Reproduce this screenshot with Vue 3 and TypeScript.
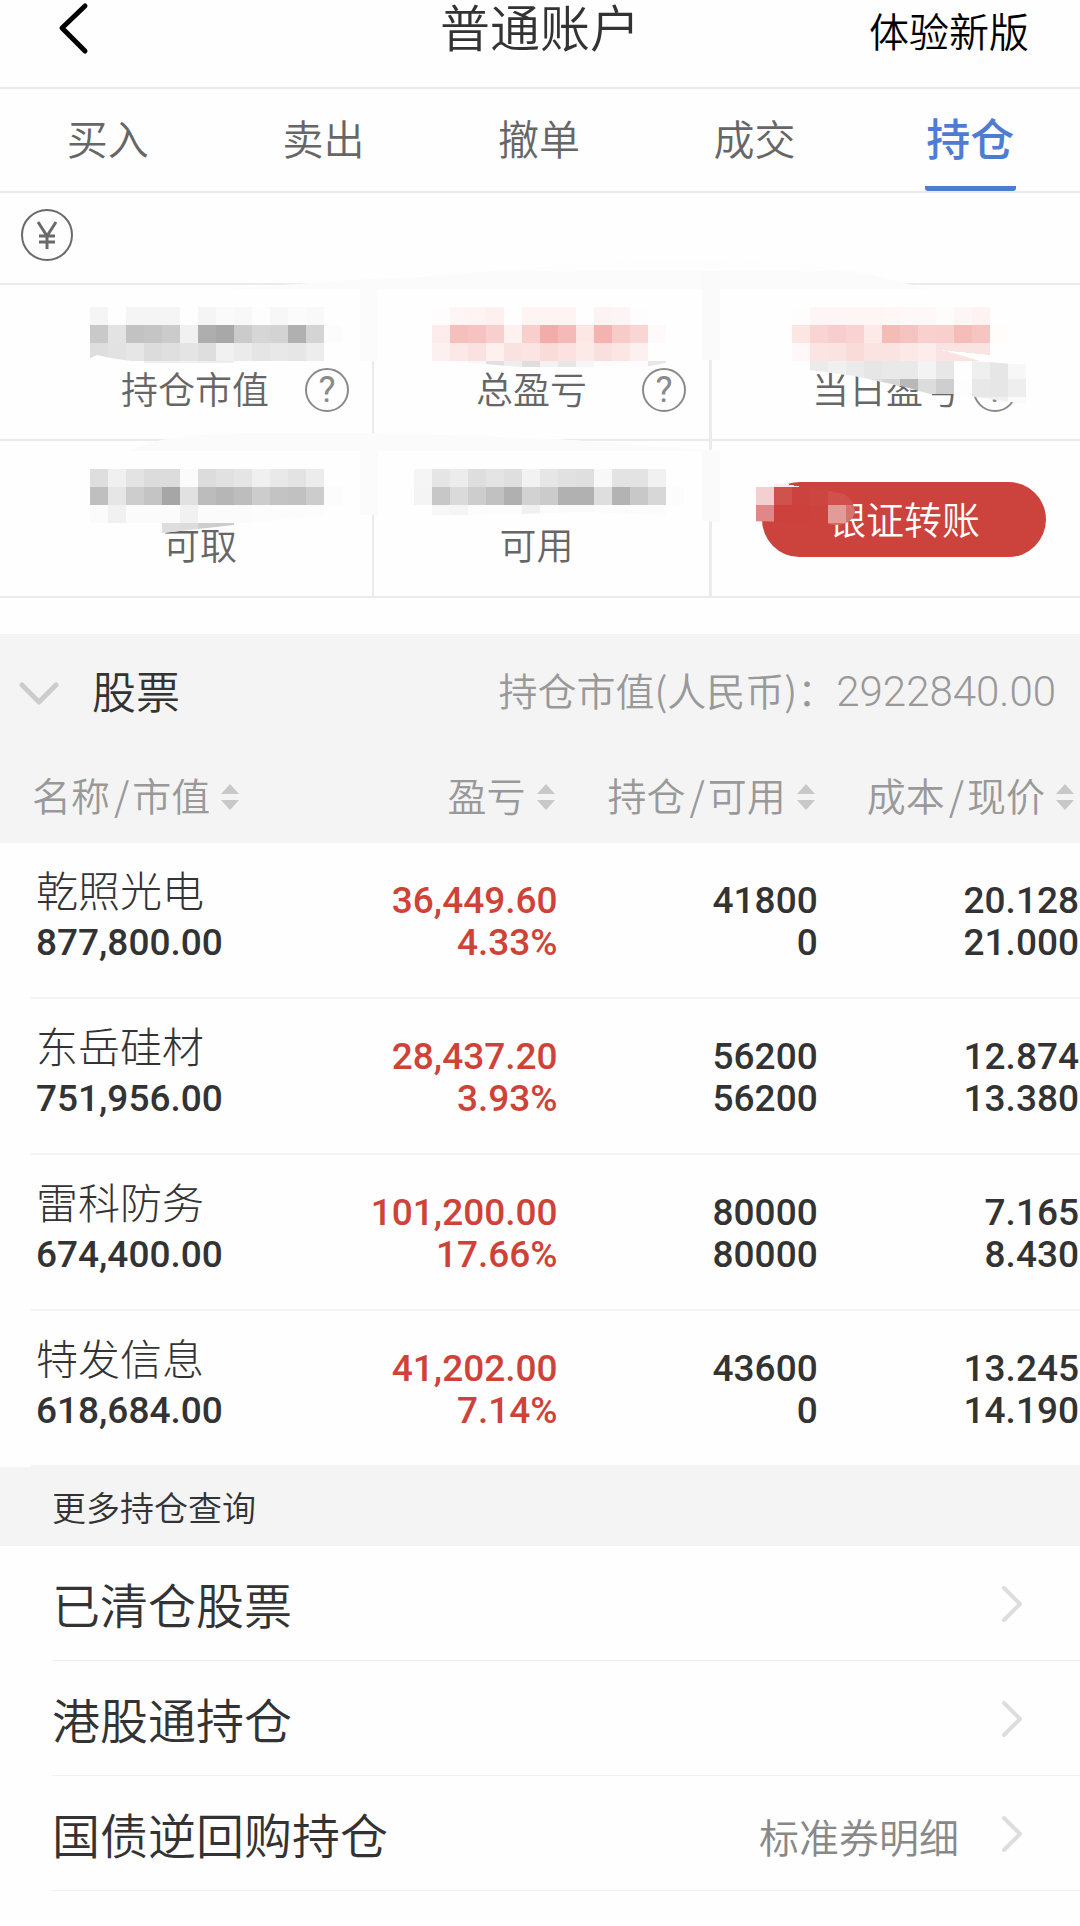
<script setup lang="ts">
import { ref } from 'vue'

interface Holding {
  name: string
  value: string
  profit: string
  rate: string
  held: string
  usable: string
  cost: string
  price: string
}

interface MoreLink {
  label: string
  note?: string
}

interface MosaicRow {
  x: number
  y: number
  colors: string
}

const tabs: string[] = ['买入', '卖出', '撤单', '成交', '持仓']
const active = ref<string>('持仓')

const columns: string[][] = [['名称', '市值'], ['盈亏'], ['持仓', '可用'], ['成本', '现价']]

const holdings: Holding[] = [
  { name: '乾照光电', value: '877,800.00', profit: '36,449.60', rate: '4.33%', held: '41800', usable: '0', cost: '20.128', price: '21.000' },
  { name: '东岳硅材', value: '751,956.00', profit: '28,437.20', rate: '3.93%', held: '56200', usable: '56200', cost: '12.874', price: '13.380' },
  { name: '雷科防务', value: '674,400.00', profit: '101,200.00', rate: '17.66%', held: '80000', usable: '80000', cost: '7.165', price: '8.430' },
  { name: '特发信息', value: '618,684.00', profit: '41,202.00', rate: '7.14%', held: '43600', usable: '0', cost: '13.245', price: '14.190' },
]

const links: MoreLink[] = [
  { label: '已清仓股票' },
  { label: '港股通持仓' },
  { label: '国债逆回购持仓', note: '标准券明细' },
]

// Privacy mosaic: every colour in a row is one 18px block.
const block = 18

const upperMosaic: MosaicRow[] = [
  { x: 90, y: 307, colors: 'f5f5f5 fefefe f5f5f5 f5f5f5 f5f5f5 fefefe f5f5f5 fafafa f8f8f8 fdfdfd f7f7f7 fbfbfb f9f9f9' },
  { x: 90, y: 325, colors: 'c9c9c9 e3e3e3 c2c2c2 c5c5c5 cbcbcb f1f1f1 aeaeae a8a8a8 cbcbcb d6d6d6 d3d3d3 b0b0b0 d4d4d4 fcfcfc' },
  { x: 90, y: 343, colors: 'dedede e2e2e2 e6e6e6 dcdcdc dfdfdf e4e4e4 dedede f1f1f1 ebebeb e5e5e5 e8e8e8 e6e6e6 ededed' },
  { x: 144, y: 361, colors: 'f0f0f0 eeeeee f0f0f0 eeeeee eaeaea' },
  { x: 432, y: 307, colors: 'fefcfc fef5f4 fff4f3 fdf0ef fefefe fef4f3 fef4f3 fef4f3 fefefe fcf3f3 fdf5f5 fefcfc' },
  { x: 432, y: 325, colors: 'fcedec f5bfbb f6c4c0 f8cfcd fef2f0 f8cfcd f2aca9 f5bab7 fce7e5 f4b3b1 f7ccc8 f9d5d3 fff9f9' },
  { x: 432, y: 343, colors: 'fdf0f0 fce8e7 fbe2e1 fdf0ee fae2e1 fbe4e3 f9dbd8 fbe1df fceae8 fadfdf fbe6e4 fdf0f0' },
  { x: 468, y: 361, colors: 'f7f7f7 e0e0e0 eeeeee dedede f2f2f2 e6e6e6 f6f6f6 fcfcfc fcfcfc fcfcfc e6e6e6' },
  { x: 792, y: 307, colors: 'fffcfc fef6f6 fef6f6 fdf6f5 fdf6f4 fef7f6 fef9f8 fef8f6 fefcfb fef6f6 fff3f1' },
  { x: 792, y: 325, colors: 'fbe6e4 f8d4d2 f7cecd f9d3d2 fce9e8 f5bbb7 f5c4c1 f8d0ce f8cfcd f5bcb8 f5c5c1 fffcfa' },
  { x: 792, y: 343, colors: 'fef8f8 fce4e4 fbe3e2 f9dbd9 fbe3e2 fbe3e2 fce8e7 fcecec fbe3e3 fbe3e1 fbe3e1' },
]

const shadeMosaic: MosaicRow[] = [
  { x: 810, y: 361, colors: 'ebebeb f0f0f0 ebebeb e6e6e6 e9e9e9 e9e9e9 f3f3f3 e8e6e7 fefefe efefef e6e6e6 f7f7f7' },
  { x: 864, y: 379, colors: 'dddddd d5d5d5 b8b8b8 dcdcdc cecece fdfdfd e8e8e8 e6e6e6 eeeeee' },
  { x: 972, y: 397, colors: 'f0f0f0 f0f0f0 fafafa' },
]

const lowerMosaic: MosaicRow[] = [
  { x: 90, y: 469, colors: 'dedede f0f0f0 e3e3e3 dcdcdc dcdcdc fbfbfb dcdcdc e1e1e1 e5e5e5 f0f0f0 e9e9e9 e3e3e3 ececec' },
  { x: 90, y: 487, colors: 'bfbfbf e6e6e6 cdcdcd c4c4c4 a6a6a6 e1e1e1 bcbcbc b6b6b6 bdbdbd cccccc c3c3c3 c1c1c1 cccccc fcfcfc' },
  { x: 90, y: 505, colors: 'fbfbfb f1f1f1 fbfbfb fbfbfb fbfbfb f1f1f1 fbfbfb fbfbfb fbfbfb fcfcfc fcfcfc fcfcfc fcfcfc' },
  { x: 162, y: 523, colors: 'dedede dcdcdc cecece cccccc' },
  { x: 414, y: 469, colors: 'f5f5f5 e5e5e5 ececec dedede e4e4e4 dfdfdf f2f2f2 e6e6e6 e1e1e1 dfdfdf f8f8f8 e3e3e3 e3e3e3 f1f1f1' },
  { x: 414, y: 487, colors: 'f4f4f4 c7c7c7 dadada cdcdcd c1c1c1 b0b0b0 d2d2d2 cbcbcb b1b1b1 b1b1b1 dedede b3b3b3 c8c8c8 d7d7d7 fcfcfc' },
  { x: 432, y: 505, colors: 'f7f7f7 f5f5f5 fcfcfc fcfcfc fcfcfc f0f0f0 fbfbfb fafafa fafafa fcfcfc fbfbfb fbfbfb fcfcfc' },
]

const buttonMosaic: MosaicRow[] = [
  { x: 756, y: 487, colors: 'f3cfcf cf524d cc423e cd453f cf504c cf504c' },
  { x: 756, y: 505, colors: 'df8887 cc413c cc413c cc423c e29b97 d7736f' },
  { x: 828, y: 523, colors: 'd46b66 d46b66' },
]
</script>

<template>
  <div class="app">
    <header class="bar">
      <button class="back" type="button" aria-label="返回">
        <svg width="32" height="54" viewBox="0 0 32 54" aria-hidden="true">
          <path d="M28 5 L5 27 L28 50" fill="none" stroke="#000" stroke-width="5" stroke-linecap="round" stroke-linejoin="round" />
        </svg>
      </button>
      <h1>普通账户</h1>
      <a class="trial" href="#">体验新版</a>
    </header>

    <nav class="tabs">
      <button
        v-for="tab in tabs"
        :key="tab"
        type="button"
        class="tab"
        :class="{ on: tab === active }"
        @click="active = tab"
      >
        <span>{{ tab }}</span>
      </button>
    </nav>

    <section class="summary">
      <div class="account">
        <svg width="54" height="54" viewBox="0 0 54 54" fill="none" stroke="#6a6a6a" stroke-width="2" role="img" aria-label="人民币">
          <circle cx="27" cy="27" r="25" />
          <path d="M18 14 L27 28 L36 14 M27 28 V41 M19 28 H35 M19 34 H35" stroke-width="3" />
        </svg>
      </div>

      <div class="grid">
        <div class="cell first">
          <span>持仓市值</span>
          <button class="help" type="button" aria-label="持仓市值说明">?</button>
        </div>
        <div class="cell second">
          <span>总盈亏</span>
          <button class="help" type="button" aria-label="总盈亏说明">?</button>
        </div>
        <div class="cell third">
          <span>当日盈亏</span>
          <button class="help" type="button" aria-label="当日盈亏说明">?</button>
        </div>
        <div class="cell cash"><span>可取</span></div>
        <div class="cell free"><span>可用</span></div>
        <div class="cell action">
          <button class="transfer" type="button">银证转账</button>
        </div>
      </div>

      <svg class="mosaic" viewBox="0 193 1080 405" preserveAspectRatio="none" shape-rendering="crispEdges" aria-hidden="true">
        <defs>
          <clipPath id="upper">
            <path d="M32 325 Q36 303 80 298 L120 296 L300 284 L350 280 L440 276 L500 270 Q620 260 700 262 L780 263 Q850 268 900 282 L960 297 L1060 315 Q1080 325 1070 350 L1045 366 L990 358 L943 350 L990 364 L900 386 L855 376 L810 370 L760 363 L710 360 L675 361 L650 366 L580 367 L520 367 L485 364 L440 361 L342 361 L200 363 L145 363 L110 358 L97 355 L80 363 L60 368 Q38 366 32 325 Z" />
          </clipPath>
          <clipPath id="shade">
            <path d="M810 361 H972 L1045 366 V398 L1026 404 L990 399 L955 394 H930 L905 387 L855 376 L810 370 Z" />
          </clipPath>
          <clipPath id="lower">
            <path d="M6 490 Q4 460 20 458 L80 460 Q120 455 150 443 Q180 434 250 433 L360 433 L440 435 L500 437 L570 440 L640 445 L690 449 L738 452 Q752 462 752 485 L752 515 L740 525 L700 520 L640 514 L580 512 L520 514 L480 515 L378 515 L330 515 L290 518 L234 525 L162 533 L60 536 Q10 530 6 490 Z" />
          </clipPath>
          <clipPath id="pill">
            <path d="M750 484 L775 484 L822 489 L844 494 Q854 500 855 512 Q852 525 835 525 L820 523 L750 521 Z" />
          </clipPath>
        </defs>

        <g clip-path="url(#upper)">
          <rect x="0" y="255" width="1080" height="160" fill="#fefefe" />
          <rect x="0" y="255" width="1080" height="16" fill="#fdfdfd" />
          <rect x="0" y="271" width="1080" height="18" fill="#fbfbfb" />
          <rect x="360" y="289" width="18" height="74" fill="#fbfbfb" />
          <rect x="702" y="271" width="18" height="90" fill="#fafafa" />
          <template v-for="row in upperMosaic" :key="row.x + '-' + row.y">
            <rect
              v-for="(color, i) in row.colors.split(' ')"
              :key="i"
              :x="row.x + i * block"
              :y="row.y"
              :width="block"
              :height="block"
              :fill="'#' + color"
            />
          </template>
        </g>

        <g clip-path="url(#shade)">
          <template v-for="row in shadeMosaic" :key="row.x + '-' + row.y">
            <rect
              v-for="(color, i) in row.colors.split(' ')"
              :key="i"
              :x="row.x + i * block"
              :y="row.y"
              :width="block"
              :height="block"
              :fill="'#' + color"
            />
          </template>
        </g>
        <path d="M940 350 L990 355 L1045 366 L990 360 Z" fill="#fefefe" />

        <g clip-path="url(#lower)">
          <rect x="0" y="430" width="1080" height="110" fill="#fefefe" />
          <rect x="0" y="433" width="720" height="18" fill="#fbfbfb" />
          <rect x="360" y="451" width="18" height="70" fill="#fbfbfb" />
          <rect x="702" y="449" width="18" height="76" fill="#fafafa" />
          <template v-for="row in lowerMosaic" :key="row.x + '-' + row.y">
            <rect
              v-for="(color, i) in row.colors.split(' ')"
              :key="i"
              :x="row.x + i * block"
              :y="row.y"
              :width="block"
              :height="block"
              :fill="'#' + color"
            />
          </template>
        </g>

        <path d="M774 484 L786 484 L802 487 L774 487 Z" fill="#fbeeee" />
        <g clip-path="url(#pill)">
          <template v-for="row in buttonMosaic" :key="row.x + '-' + row.y">
            <rect
              v-for="(color, i) in row.colors.split(' ')"
              :key="i"
              :x="row.x + i * block"
              :y="row.y"
              :width="block"
              :height="block"
              :fill="'#' + color"
            />
          </template>
        </g>
      </svg>
    </section>

    <section class="stocks">
      <div class="group">
        <svg width="40" height="24" viewBox="0 0 40 24" aria-hidden="true">
          <path d="M3 4 L20 21 L37 4" fill="none" stroke="#ccc" stroke-width="5" stroke-linecap="round" stroke-linejoin="round" />
        </svg>
        <h2>股票</h2>
        <p>持仓市值(人民币)：<b>2922840.00</b></p>
      </div>

      <table>
        <thead>
          <tr>
            <th v-for="(names, c) in columns" :key="c" scope="col">
              <button type="button">
                <span>{{ names[0] }}</span>
                <template v-if="names[1]"><i>/</i><span>{{ names[1] }}</span></template>
                <svg width="18" height="26" viewBox="0 0 18 26" fill="#c8c8c8" aria-hidden="true">
                  <path d="M9 0 L18 10 H0 Z M0 16 H18 L9 26 Z" />
                </svg>
              </button>
            </th>
          </tr>
        </thead>
        <tbody>
          <tr v-for="h in holdings" :key="h.name">
            <td>
              <div class="name">{{ h.name }}</div>
              <div>{{ h.value }}</div>
            </td>
            <td class="gain"><div>{{ h.profit }}</div><div>{{ h.rate }}</div></td>
            <td><div>{{ h.held }}</div><div>{{ h.usable }}</div></td>
            <td><div>{{ h.cost }}</div><div>{{ h.price }}</div></td>
          </tr>
        </tbody>
      </table>
    </section>

    <section class="more">
      <h3>更多持仓查询</h3>
      <ul>
        <li v-for="link in links" :key="link.label">
          <a href="#">
            <span>{{ link.label }}</span>
            <small v-if="link.note">{{ link.note }}</small>
            <svg width="22" height="38" viewBox="0 0 22 38" aria-hidden="true">
              <path d="M3 4 L19 20 L3 36" fill="none" stroke="#ddd" stroke-width="4" stroke-linecap="round" stroke-linejoin="round" />
            </svg>
          </a>
        </li>
      </ul>
    </section>
  </div>
</template>

<style>
body {
  margin: 0;
  background: #fefefe;
}
</style>

<style scoped>
.app {
  color: #333;
  background: #fefefe;
  font-family: "Noto Sans CJK SC", sans-serif;
  font-weight: 350;
}

button {
  margin: 0;
  padding: 0;
  border: 0;
  background: none;
  color: inherit;
  font: inherit;
}

a {
  color: inherit;
  text-decoration: none;
}

h1, h2, h3, p, ul {
  margin: 0;
  padding: 0;
  font-weight: 350;
  list-style: none;
}

svg {
  display: block;
  flex: none;
}

.bar {
  display: grid;
  grid-template-columns: 1fr auto 1fr;
  height: 87px;
  border-bottom: 2px solid #ebebeb;
}

.back {
  justify-self: start;
  align-self: start;
  padding: 1px 0 0 57px;
}

h1 {
  font-size: 50px;
  line-height: 50px;
}

.trial {
  justify-self: end;
  padding-right: 51px;
  color: #000;
  font-size: 40px;
  line-height: 60px;
}

.tabs {
  display: grid;
  grid-template-columns: repeat(5, 1fr);
  height: 102px;
  padding-right: 2px;
  border-bottom: 2px solid #ebebeb;
}

.tab {
  display: flex;
  justify-content: center;
  color: #666;
  font-size: 41px;
  line-height: 96px;
}

.tab span {
  box-sizing: border-box;
  height: 102px;
}

.on {
  color: #4e7cd3;
  font-size: 44px;
  font-weight: 500;
}

.on span {
  width: 91px;
  background: linear-gradient(#4e7cd3, #4e7cd3) bottom / 100% 5px no-repeat;
  border-radius: 3px;
}

.summary {
  position: relative;
}

.account {
  height: 75px;
  padding: 15px 0 0 20px;
  border-bottom: 2px solid #ebebeb;
}

.grid {
  display: grid;
  grid-template-columns: 374fr 338fr 368fr;
}

.cell {
  box-sizing: border-box;
  display: flex;
  height: 156px;
  padding-top: 83px;
  border-right: 2px solid #ebebeb;
  border-bottom: 2px solid #ebebeb;
  color: #666;
  font-size: 37px;
  line-height: 40px;
  white-space: nowrap;
}

.first, .second, .third {
  justify-content: flex-end;
}

.first {
  gap: 36px;
  padding-right: 23px;
}

.second {
  gap: 55px;
  padding-right: 23px;
}

.third {
  gap: 13px;
  padding-right: 63px;
}

.second, .free {
  border-right-width: 3px;
}

.third, .action {
  border-right: 0;
}

.cash, .free {
  justify-content: center;
}

.cash {
  padding-left: 28px;
}

.free {
  padding-right: 10px;
}

.action {
  padding: 41px 34px 0 50px;
}

.cash, .free, .action {
  height: 157px;
}

.help {
  box-sizing: border-box;
  width: 44px;
  height: 44px;
  border: 2px solid #8a8a8a;
  border-radius: 50%;
  color: #8a8a8a;
  font-family: Roboto, sans-serif;
  font-size: 36px;
  font-weight: 400;
  line-height: 40px;
}

.transfer {
  flex: 1;
  height: 75px;
  padding-bottom: 4px;
  border-radius: 38px;
  background: #cc423c;
  color: #fff;
  font-size: 38px;
  line-height: 71px;
}

.mosaic {
  position: absolute;
  inset: 0;
  width: 100%;
  height: 100%;
  pointer-events: none;
}

.stocks {
  margin-top: 36px;
}

.group {
  display: flex;
  align-items: center;
  height: 117px;
  padding: 0 24px 0 19px;
  background: #f4f4f4;
}

h2 {
  margin-left: 33px;
  padding-bottom: 6px;
  font-size: 44px;
}

.group p {
  margin-left: auto;
  padding-bottom: 8px;
  color: #999;
  font-size: 39px;
}

b {
  font-family: Roboto, sans-serif;
  font-size: 42px;
  font-weight: 300;
}

table {
  width: calc(100% - 31px);
  margin-left: 31px;
  border-collapse: separate;
  border-spacing: 0;
  table-layout: fixed;
}

th {
  box-sizing: border-box;
  width: 24.8%;
  height: 92px;
  padding: 0 3px 0 0;
  background: #f4f4f4;
  color: #999;
  font-size: 39px;
  font-weight: 350;
  line-height: 56px;
  text-align: right;
}

th:first-child {
  width: 25.4%;
  padding-left: 1px;
  box-shadow: -31px 0 0 #f4f4f4;
  text-align: left;
}

th:last-child {
  width: auto;
  padding-right: 6px;
}

th button {
  display: inline-flex;
  align-items: center;
  white-space: nowrap;
}

th span, th i {
  padding-bottom: 7px;
}

th i {
  margin: 0 3px 0 4px;
  font-style: normal;
}

th svg {
  margin-left: 11px;
}

td {
  height: 117px;
  padding: 37px 0 0;
  border-bottom: 2px solid #f4f4f4;
  font-family: Roboto, "Noto Sans CJK SC", sans-serif;
  font-size: 37px;
  font-weight: 500;
  line-height: 42px;
  text-align: right;
  vertical-align: top;
}

td:first-child {
  height: 136px;
  padding: 18px 0 0 5px;
  text-align: left;
}

td:last-child {
  padding-right: 1px;
}

.gain {
  color: #cf4238;
}

.name {
  margin-bottom: 5px;
  font-family: "Noto Sans CJK SC", sans-serif;
  font-size: 42px;
  font-weight: 300;
  line-height: 56px;
}

h3 {
  padding-left: 52px;
  background: #f4f4f4;
  font-size: 34px;
  line-height: 79px;
}

.more a {
  display: flex;
  align-items: center;
  height: 114px;
  margin-left: 52px;
  padding-right: 57px;
  border-bottom: 1px solid #efefef;
}

.more span {
  margin-right: auto;
  font-size: 48px;
}

small {
  margin-right: 42px;
  padding-top: 6px;
  color: #888;
  font-size: 40px;
}
</style>
